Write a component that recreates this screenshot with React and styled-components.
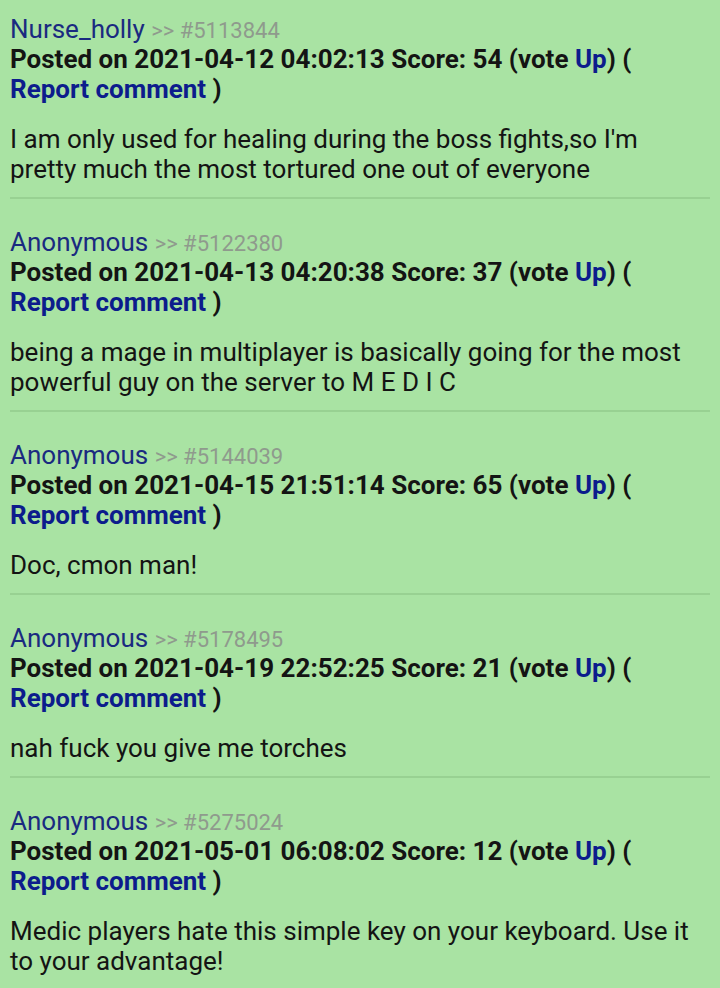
import React from 'react';
import styled, { createGlobalStyle } from 'styled-components';

const GlobalStyle = createGlobalStyle`
  html, body {
    margin: 0;
    padding: 0;
    background: #a9e3a3;
  }
  body {
    font-family: Roboto, "Noto Sans", sans-serif;
    -webkit-font-smoothing: antialiased;
  }
`;

const comments = [
  {
    author: 'Nurse_holly',
    id: '5113844',
    date: '2021-04-12 04:02:13',
    score: 54,
    text: "I am only used for healing during the boss fights,so I'm pretty much the most tortured one out of everyone",
  },
  {
    author: 'Anonymous',
    id: '5122380',
    date: '2021-04-13 04:20:38',
    score: 37,
    text: 'being a mage in multiplayer is basically going for the most powerful guy on the server to M E D I C',
  },
  {
    author: 'Anonymous',
    id: '5144039',
    date: '2021-04-15 21:51:14',
    score: 65,
    text: 'Doc, cmon man!',
  },
  {
    author: 'Anonymous',
    id: '5178495',
    date: '2021-04-19 22:52:25',
    score: 21,
    text: 'nah fuck you give me torches',
  },
  {
    author: 'Anonymous',
    id: '5275024',
    date: '2021-05-01 06:08:02',
    score: 12,
    text: 'Medic players hate this simple key on your keyboard. Use it to your advantage!',
  },
];

const Page = styled.div`
  min-height: 988px;
  padding: 14px 10px 0;
  box-sizing: border-box;
  background: #a9e3a3;
`;

const Comment = styled.div`
  padding-bottom: 13px;
  margin-bottom: 28px;
  border-bottom: 2px solid #98d192;

  &:last-child {
    border-bottom: none;
  }
`;

const Meta = styled.div`
  font-size: 26px;
  line-height: 30px;
  color: #141414;
`;

const Author = styled.span`
  color: #1a2a80;
`;

const Ref = styled.span`
  color: #8f9a8d;
  font-size: 22px;
  line-height: 1;
`;

const Posted = styled.div`
  font-weight: 700;
`;

const Link = styled.a`
  color: #0c1c8c;
  text-decoration: none;
  cursor: pointer;
`;

const Body = styled.p`
  margin: 20px 0 0;
  font-size: 26px;
  line-height: 30px;
  color: #141414;
`;

export default function App() {
  return (
    <>
      <GlobalStyle />
      <Page>
        {comments.map((c) => (
          <Comment key={c.id}>
            <Meta>
              <Author>{c.author}</Author> <Ref>&gt;&gt; #{c.id}</Ref>
              <Posted>
                Posted on {c.date} Score: {c.score} (vote <Link>Up</Link>) ({' '}
                <Link>Report comment</Link> )
              </Posted>
            </Meta>
            <Body>{c.text}</Body>
          </Comment>
        ))}
      </Page>
    </>
  );
}
